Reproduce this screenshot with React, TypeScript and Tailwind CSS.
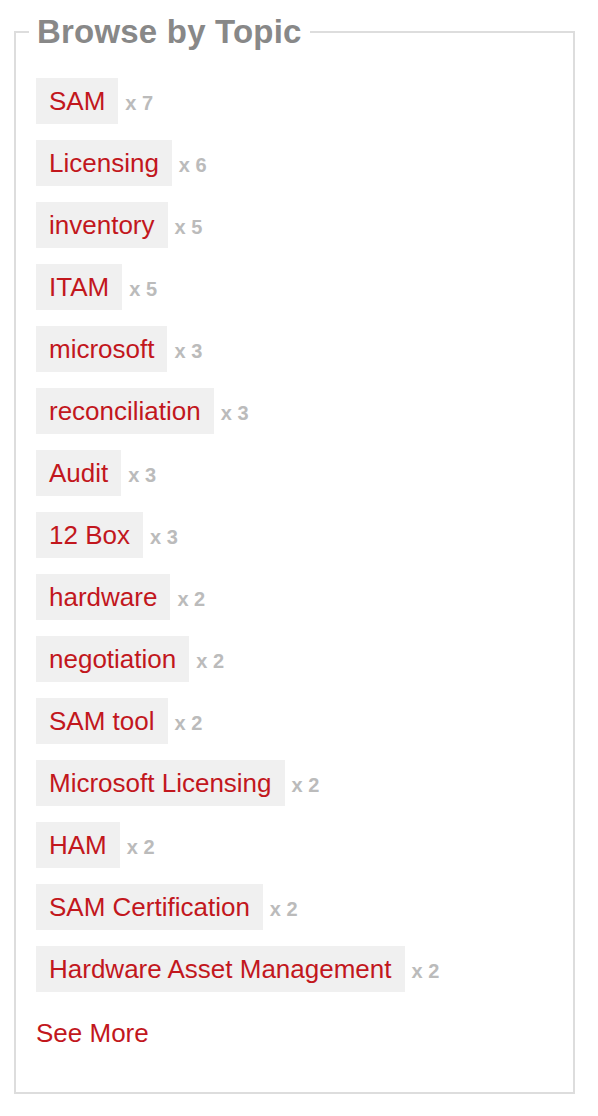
const topics: { name: string; count: number }[] = [
  { name: "SAM", count: 7 },
  { name: "Licensing", count: 6 },
  { name: "inventory", count: 5 },
  { name: "ITAM", count: 5 },
  { name: "microsoft", count: 3 },
  { name: "reconciliation", count: 3 },
  { name: "Audit", count: 3 },
  { name: "12 Box", count: 3 },
  { name: "hardware", count: 2 },
  { name: "negotiation", count: 2 },
  { name: "SAM tool", count: 2 },
  { name: "Microsoft Licensing", count: 2 },
  { name: "HAM", count: 2 },
  { name: "SAM Certification", count: 2 },
  { name: "Hardware Asset Management", count: 2 },
]

export default function App() {
  return (
    <div className="min-h-[1116px] bg-white pt-[13px] font-['Liberation_Sans',Arial,sans-serif]">
      <fieldset className="ml-[14px] w-[561px] border-2 border-[#dddddd] pl-[20px] pr-5 pb-[44px]">
        <legend className="-ml-[7px] px-2 text-[33px] font-bold leading-[38px] tracking-[0.2px] text-[#888888]">
          Browse by Topic
        </legend>
        <ul className="flex flex-col gap-4 pt-[27px]">
          {topics.map((t) => (
            <li key={t.name} className="flex items-baseline">
              <a href="#" className="bg-[#f0f0f0] px-[13px] py-2 text-[26px] leading-[30px] text-[#c2171d]">
                {t.name}
              </a>
              <span className="ml-[7px] text-[20px] font-bold text-[#bbbbbb]">x {t.count}</span>
            </li>
          ))}
        </ul>
        <a href="#" className="mt-[26px] block text-[26px] leading-[30px] text-[#c2171d]">
          See More
        </a>
      </fieldset>
    </div>
  )
}
